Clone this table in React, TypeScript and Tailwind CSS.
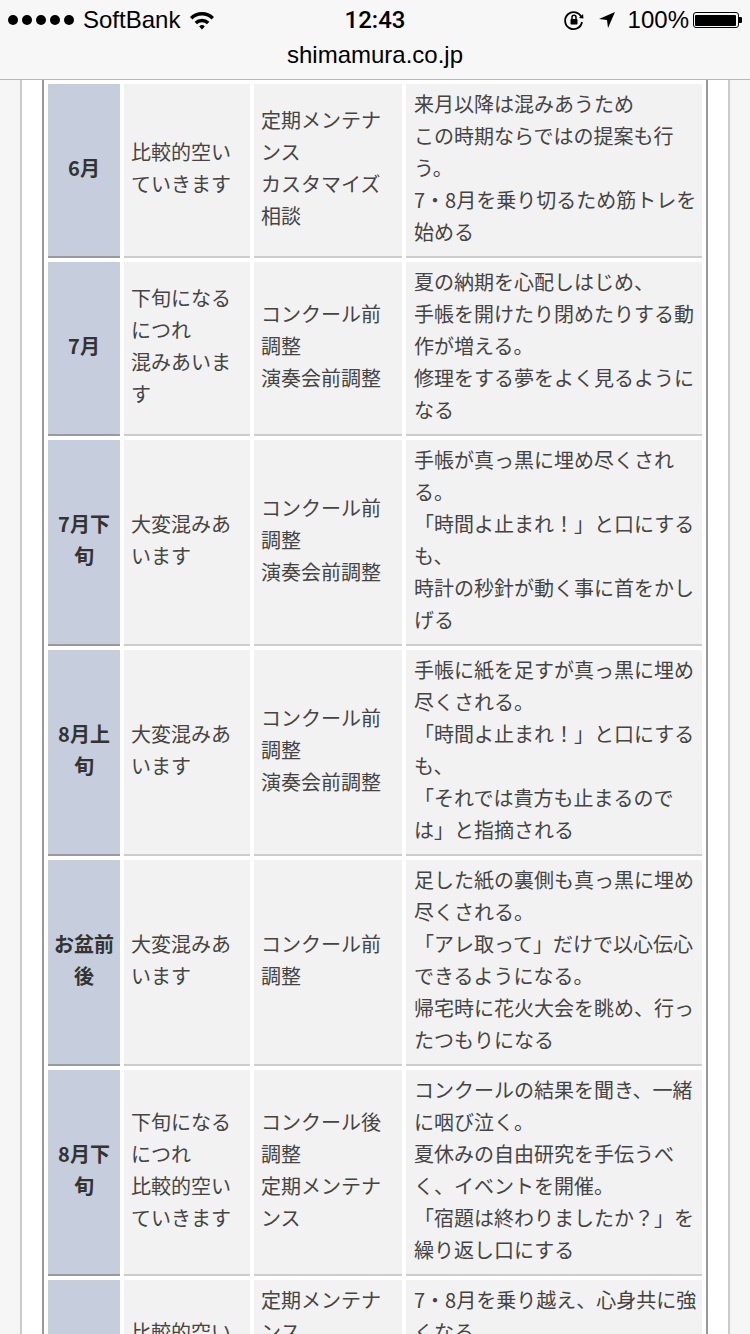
import React from "react";

type Row = {
  label: string[];
  crowd: string[];
  work: string[];
  note: string[];
};

const rows: Row[] = [
  {
    label: ["6月"],
    crowd: ["比較的空い", "ていきます"],
    work: ["定期メンテナ", "ンス", "カスタマイズ", "相談"],
    note: [
      "来月以降は混みあうため",
      "この時期ならではの提案も行",
      "う。",
      "7・8月を乗り切るため筋トレを",
      "始める",
    ],
  },
  {
    label: ["7月"],
    crowd: ["下旬になる", "につれ", "混みあいま", "す"],
    work: ["コンクール前", "調整", "演奏会前調整"],
    note: [
      "夏の納期を心配しはじめ、",
      "手帳を開けたり閉めたりする動",
      "作が増える。",
      "修理をする夢をよく見るように",
      "なる",
    ],
  },
  {
    label: ["7月下", "旬"],
    crowd: ["大変混みあ", "います"],
    work: ["コンクール前", "調整", "演奏会前調整"],
    note: [
      "手帳が真っ黒に埋め尽くされ",
      "る。",
      "「時間よ止まれ！」と口にする",
      "も、",
      "時計の秒針が動く事に首をかし",
      "げる",
    ],
  },
  {
    label: ["8月上", "旬"],
    crowd: ["大変混みあ", "います"],
    work: ["コンクール前", "調整", "演奏会前調整"],
    note: [
      "手帳に紙を足すが真っ黒に埋め",
      "尽くされる。",
      "「時間よ止まれ！」と口にする",
      "も、",
      "「それでは貴方も止まるので",
      "は」と指摘される",
    ],
  },
  {
    label: ["お盆前", "後"],
    crowd: ["大変混みあ", "います"],
    work: ["コンクール前", "調整"],
    note: [
      "足した紙の裏側も真っ黒に埋め",
      "尽くされる。",
      "「アレ取って」だけで以心伝心",
      "できるようになる。",
      "帰宅時に花火大会を眺め、行っ",
      "たつもりになる",
    ],
  },
  {
    label: ["8月下", "旬"],
    crowd: ["下旬になる", "につれ", "比較的空い", "ていきます"],
    work: ["コンクール後", "調整", "定期メンテナ", "ンス"],
    note: [
      "コンクールの結果を聞き、一緒",
      "に咽び泣く。",
      "夏休みの自由研究を手伝うべ",
      "く、イベントを開催。",
      "「宿題は終わりましたか？」を",
      "繰り返し口にする",
    ],
  },
  {
    label: ["9月"],
    crowd: ["比較的空い", "ていきます"],
    work: ["定期メンテナ", "ンス", "カスタマイズ", "相談"],
    note: [
      "7・8月を乗り越え、心身共に強",
      "くなる",
      "秋の演奏会に向けて",
      "準備を始める",
    ],
  },
];

function Lines({ lines }: { lines: string[] }) {
  return (
    <div>
      {lines.map((l, i) => (
        <div key={i} className="whitespace-nowrap">
          {l}
        </div>
      ))}
    </div>
  );
}

function StatusBar() {
  return (
    <div className="flex h-[40px] items-center justify-between px-[8px] text-[24px] text-black">
      <div className="flex w-[260px] items-center">
        <div className="flex items-center gap-[4px]">
          {[0, 1, 2, 3, 4].map((i) => (
            <span key={i} className="block h-[10px] w-[10px] rounded-full bg-black" />
          ))}
        </div>
        <span className="ml-[9px]">SoftBank</span>
        <svg className="ml-[8px]" width="28" height="22" viewBox="0 0 28 22">
          <path d="M2 8 A17 17 0 0 1 26 8 L23.6 10.6 A13.4 13.4 0 0 0 4.4 10.6 Z" fill="#000" />
          <path d="M6.6 12.8 A10.6 10.6 0 0 1 21.4 12.8 L19 15.3 A7.2 7.2 0 0 0 9 15.3 Z" fill="#000" />
          <path d="M11.2 17.4 A4 4 0 0 1 16.8 17.4 L14 20.6 Z" fill="#000" />
        </svg>
      </div>
      <div className="font-medium" style={{ fontFamily: "Roboto, sans-serif" }}>
        12:43
      </div>
      <div className="flex w-[260px] items-center justify-end">
        <svg width="24" height="24" viewBox="0 0 24 24" fill="none">
          <path d="M19.5 9.5 A8.5 8.5 0 1 0 20 14" stroke="#000" strokeWidth="1.8" />
          <path d="M17 10 L21.5 10.5 L21 6 Z" fill="#000" />
          <rect x="8.5" y="11" width="7" height="5.5" rx="0.8" fill="#000" />
          <path d="M10 11 V9.3 A2 2 0 0 1 14 9.3 V11" stroke="#000" strokeWidth="1.5" />
        </svg>
        <svg className="ml-[12px]" width="18" height="18" viewBox="0 0 18 18">
          <path d="M17 1 L1 8 L9 9 L10 17 Z" fill="#000" />
        </svg>
        <span className="ml-[12px]">100%</span>
        <div className="ml-[4px] flex items-center">
          <div className="h-[16px] w-[46px] rounded-[3px] border-[1.5px] border-black p-[1.5px]">
            <div className="h-full w-full rounded-[1px] bg-black" />
          </div>
          <div className="h-[6px] w-[3px] rounded-r-[1px] bg-black" />
        </div>
      </div>
    </div>
  );
}

export default function App() {
  return (
    <div
      className="h-[1334px] w-[750px] overflow-hidden bg-[#f6f6f6]"
      style={{ fontFamily: '"Liberation Sans", "Noto Sans CJK JP", sans-serif' }}
    >
      <div className="h-[80px] border-b border-[#b8b8b8] bg-[#f7f7f7]">
        <StatusBar />
        <div className="flex h-[39px] items-center justify-center pb-[10px] text-[24px] text-black">
          shimamura.co.jp
        </div>
      </div>

      <div className="mx-[20px] border-x-2 border-[#cbcbcb] bg-white px-[20px]">
        <div
          className="grid grid-cols-[72px_126px_148px_296px] gap-[4px] border-x-2 border-[#9a9a9a] p-[4px] text-[20px] leading-[32px] text-[#444]"
          style={{ fontFamily: '"Noto Sans CJK JP", sans-serif' }}
        >
          {rows.map((r, i) => (
            <React.Fragment key={i}>
              <div className="flex items-center justify-center border-b-2 border-[#9a9a9a] bg-[#c6cddd] px-[6px] pt-[4px] pb-[8px] text-center font-bold text-[#333]">
                <Lines lines={r.label} />
              </div>
              <div className="flex items-center border-b-2 border-[#cdcdcd] bg-[#f2f2f2] px-[7px] pt-[4px] pb-[8px]">
                <Lines lines={r.crowd} />
              </div>
              <div className="flex items-center border-b-2 border-[#cdcdcd] bg-[#f2f2f2] px-[7px] pt-[4px] pb-[8px]">
                <Lines lines={r.work} />
              </div>
              <div className="flex items-center border-b-2 border-[#cdcdcd] bg-[#f2f2f2] pl-[8px] pr-[4px] pt-[4px] pb-[8px]">
                <Lines lines={r.note} />
              </div>
            </React.Fragment>
          ))}
        </div>
      </div>
    </div>
  );
}
